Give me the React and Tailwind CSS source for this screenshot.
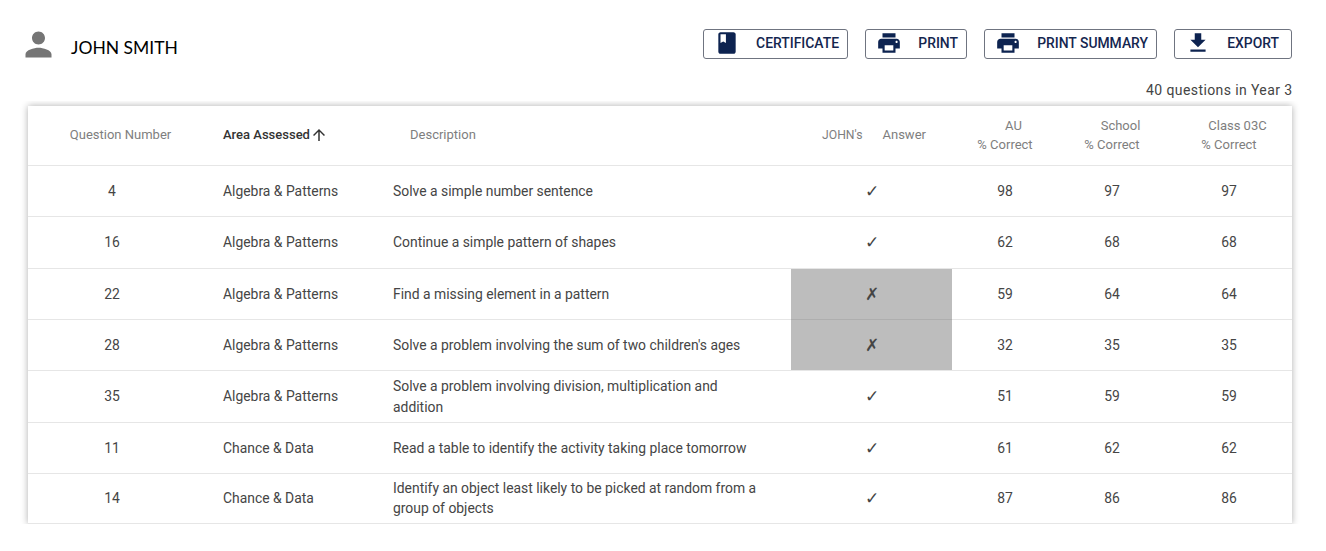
import React from 'react';

const ROBOTO = "font-['Roboto',sans-serif]";

const rows = [
  { q: 4, area: 'Algebra & Patterns', desc: 'Solve a simple number sentence', ok: true, au: 98, school: 97, cls: 97 },
  { q: 16, area: 'Algebra & Patterns', desc: 'Continue a simple pattern of shapes', ok: true, au: 62, school: 68, cls: 68 },
  { q: 22, area: 'Algebra & Patterns', desc: 'Find a missing element in a pattern', ok: false, au: 59, school: 64, cls: 64 },
  { q: 28, area: 'Algebra & Patterns', desc: "Solve a problem involving the sum of two children's ages", ok: false, au: 32, school: 35, cls: 35 },
  { q: 35, area: 'Algebra & Patterns', desc: 'Solve a problem involving division, multiplication and addition', ok: true, au: 51, school: 59, cls: 59 },
  { q: 11, area: 'Chance & Data', desc: 'Read a table to identify the activity taking place tomorrow', ok: true, au: 61, school: 62, cls: 62 },
  { q: 14, area: 'Chance & Data', desc: 'Identify an object least likely to be picked at random from a group of objects', ok: true, au: 87, school: 86, cls: 86 },
];

const icons = {
  book: 'M18 2H6c-1.1 0-2 .9-2 2v16c0 1.1.9 2 2 2h12c1.1 0 2-.9 2-2V4c0-1.1-.9-2-2-2zM6 4h5v8l-2.5-1.5L6 12V4z',
  print: 'M19 8H5c-1.66 0-3 1.34-3 3v6h4v4h12v-4h4v-6c0-1.66-1.34-3-3-3zm-3 11H8v-5h8v5zm3-7c-.55 0-1-.45-1-1s.45-1 1-1 1 .45 1 1-.45 1-1 1zm-1-9H6v4h12V3z',
  download: 'M19 9h-4V3H9v6H5l7 7 7-7zM5 18v2h14v-2H5z',
};

const Icon = ({ d, className }) => (
  <svg viewBox="0 0 24 24" fill="currentColor" className={className}>
    <path d={d} />
  </svg>
);

// toolbar button, icon sits in a fixed slot on the left
const ToolButton = ({ icon, label, width }) => (
  <button className={`${width} h-[30px] pb-[2px] flex items-center justify-between pl-[10px] pr-[8px] bg-white border border-[#6f7480] rounded-[3px] text-[#14264f] text-[13.9px] font-medium ${ROBOTO}`}>
    <Icon d={icons[icon]} className="w-[26px] h-[26px] text-[#0d2350]" />
    <span className="whitespace-nowrap">{label}</span>
  </button>
);

const Th = ({ children, className = '' }) => (
  <th className={`border-b border-[#e6e6e6] pb-[2px] text-[13px] leading-[19px] font-normal text-[#7e7e7e] ${className}`}>{children}</th>
);

const Td = ({ children, className = '' }) => (
  <td className={`border-b border-[#e6e6e6] text-[13.9px] leading-[20.5px] text-[#454545] ${className}`}>{children}</td>
);

const App = () => {
  return (
    <div className={`h-[551px] bg-white overflow-hidden ${ROBOTO}`}>
      {/* Header */}
      <div className="flex justify-between pl-[19px] pr-[34px] pt-[29px]">
        <div className="flex items-center -mt-[4.5px] h-[39px]">
          <Icon
            d="M12 12c2.21 0 4-1.79 4-4s-1.79-4-4-4-4 1.79-4 4 1.79 4 4 4zm0 2c-2.67 0-8 1.34-8 4v2h16v-2c0-2.66-5.33-4-8-4z"
            className="w-[39px] h-[39px] text-[#757575]"
          />
          <span className="ml-[13px] mt-[8px] text-[17.5px] text-black font-['Lato',sans-serif]">JOHN SMITH</span>
        </div>
        <div className="flex gap-[17px]">
          <ToolButton icon="book" label="CERTIFICATE" width="w-[145px]" />
          <ToolButton icon="print" label="PRINT" width="w-[102px]" />
          <ToolButton icon="print" label="PRINT SUMMARY" width="w-[173px]" />
          <ToolButton icon="download" label="EXPORT" width="w-[118px] !pr-[12px]" />
        </div>
      </div>

      <div className="mt-[16px] pr-[33.5px] h-[20px] leading-[20px] text-right text-[14px] tracking-[0.4px] text-[#444444]">
        40 questions in Year 3
      </div>

      {/* Card is cut off at the bottom, shadow included */}
      <div className="mt-[1.5px] ml-[18px] mr-[24px] px-[10px] pt-[5px] h-[423px] overflow-hidden">
        <div className="bg-white shadow-[0_0_7px_rgba(0,0,0,0.32)]">
          <table className="w-full table-fixed border-collapse">
            <colgroup>
              <col className="w-[168px]" />
              <col className="w-[170px]" />
              <col className="w-[425px]" />
              <col className="w-[161px]" />
              <col className="w-[106px]" />
              <col className="w-[108px]" />
              <col className="w-[126px]" />
            </colgroup>
            <thead>
              <tr className="h-[59.7px]">
                <Th className="pl-[17px] text-center">Question Number</Th>
                <Th className="pl-[27px] text-left">
                  <span className="inline-flex items-center font-medium text-[#333333]">
                    Area Assessed
                    <svg viewBox="0 0 24 24" fill="currentColor" className="w-[18px] h-[18px]">
                      <path d="M4 12l1.41 1.41L11 7.83V20h2V7.83l5.58 5.59L20 12l-8-8-8 8z" />
                    </svg>
                  </span>
                </Th>
                <Th className="pl-[44px] text-left">Description</Th>
                <Th className="pl-[5px] text-center">
                  <span className="text-[12.2px]">JOHN's</span>
                  <span className="ml-[20px]">Answer</span>
                </Th>
                <Th className="text-center"><span className="pl-[17px]">AU</span><br />% Correct</Th>
                <Th className="text-center"><span className="pl-[17px]">School</span><br />% Correct</Th>
                <Th className="text-center"><span className="pl-[17px]">Class 03C</span><br />% Correct</Th>
              </tr>
            </thead>
            <tbody>
              {rows.map((row, i) => (
                <tr key={row.q} className={i === 6 ? 'h-[50px]' : 'h-[51.3px]'}>
                  <Td className="text-center">{row.q}</Td>
                  <Td className="pl-[27px]">{row.area}</Td>
                  <Td className="pl-[27px] pr-[30px]">{row.desc}</Td>
                  <Td className={`text-center text-[17px] text-[#222222] ${row.ok ? '' : 'bg-[#bdbdbd]'} ${i === 2 ? 'border-b-[#aeaeae]' : ''}`}>
                    {row.ok ? '✓' : '✗'}
                  </Td>
                  <Td className="text-center">{row.au}</Td>
                  <Td className="text-center">{row.school}</Td>
                  <Td className="text-center">{row.cls}</Td>
                </tr>
              ))}
            </tbody>
          </table>
        </div>
      </div>
    </div>
  );
};

export default App;
